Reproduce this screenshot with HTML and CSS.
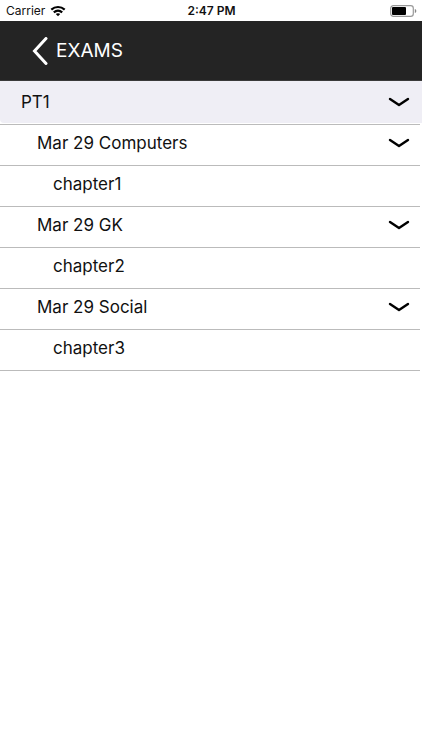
FILE: index.html
```
<!DOCTYPE html>
<html lang="en">
<head>
  <meta charset="UTF-8">
  <meta name="viewport" content="width=device-width, initial-scale=1.0">
  <title>Exams</title>
  <link rel="stylesheet" href="styles.css">
</head>
<body>
  <div class="status-bar">
    <div class="carrier">
      <span>Carrier</span>
      <svg class="wifi" width="16" height="12" viewBox="0 0 16 12" fill="none" stroke="#000" stroke-width="2.2">
        <path d="M1.3 4.6C5.2 1.1 10.8 1.1 14.7 4.6"/>
        <path d="M3.8 7.4C6.3 5.2 9.7 5.2 12.2 7.4"/>
        <path d="M5.8 9L8 11.3L10.2 9C9 7.9 7 7.9 5.8 9Z" fill="#000" stroke="none"/>
      </svg>
    </div>
    <time class="clock">2:47 PM</time>
    <svg class="battery" width="27" height="12" viewBox="0 0 27 12">
      <rect x="0.7" y="0.7" width="22.6" height="10.6" rx="2.6" fill="none" stroke="#999" stroke-width="1.2"/>
      <rect x="2" y="2" width="14" height="8" rx="1" fill="#000"/>
      <path d="M24.8 4C26.8 4.6 26.8 7.4 24.8 8Z" fill="#888"/>
    </svg>
  </div>
  <header class="nav-bar">
    <button class="back" type="button" aria-label="Back">
      <svg width="16" height="28" viewBox="0 0 16 28" fill="none" stroke="#fff" stroke-width="3" stroke-linecap="round">
        <path d="M14 1.5L2.5 14L14 26.5"/>
      </svg>
    </button>
    <h1>EXAMS</h1>
  </header>
  <main>
    <ul class="exam-list">
      <li class="selected">
        <button class="row exam" type="button" aria-expanded="true">
          <span>PT1</span>
          <svg class="chevron" viewBox="0 0 22 10"><path d="M2 2L11 8L20 2"/></svg>
        </button>
      </li>
      <li>
        <button class="row subject" type="button" aria-expanded="true">
          <span>Mar 29 Computers</span>
          <svg class="chevron" viewBox="0 0 22 10"><path d="M2 2L11 8L20 2"/></svg>
        </button>
      </li>
      <li class="row chapter">chapter1</li>
      <li>
        <button class="row subject" type="button" aria-expanded="true">
          <span>Mar 29 GK</span>
          <svg class="chevron" viewBox="0 0 22 10"><path d="M2 2L11 8L20 2"/></svg>
        </button>
      </li>
      <li class="row chapter">chapter2</li>
      <li>
        <button class="row subject" type="button" aria-expanded="true">
          <span>Mar 29 Social</span>
          <svg class="chevron" viewBox="0 0 22 10"><path d="M2 2L11 8L20 2"/></svg>
        </button>
      </li>
      <li class="row chapter">chapter3</li>
    </ul>
  </main>
</body>
</html>
```
FILE: styles.css
```
* {
  box-sizing: border-box;
}
body {
  margin: 0;
  background: #fff;
  color: #111;
  font-family: Inter, "Liberation Sans", sans-serif;
  font-size: 17px;
}
.status-bar {
  display: grid;
  grid-template-columns: 1fr auto 1fr;
  align-items: center;
  height: 21px;
  padding: 0 5px 0 6px;
  font-size: 12px;
}
.carrier {
  display: flex;
  align-items: center;
  gap: 5px;
}
.clock {
  font-weight: 600;
}
.battery {
  justify-self: end;
}
.nav-bar {
  display: flex;
  align-items: center;
  gap: 8px;
  height: 60px;
  padding: 0 32px;
  background: #242424;
  border-bottom: 1px solid #3a3a3a;
  color: #fff;
}
.nav-bar h1 {
  margin: 0;
  font-size: 19px;
  font-weight: 400;
}
.back {
  display: flex;
  padding: 0;
  border: none;
  background: none;
  cursor: pointer;
}
.exam-list {
  margin: 0;
  padding: 0 2px 0 0;
  list-style: none;
}
.row {
  display: flex;
  align-items: center;
  justify-content: space-between;
  width: 100%;
  height: 41px;
  padding: 0 10px 4px 37px;
  border: none;
  border-bottom: 1px solid #bbb;
  background: none;
  color: inherit;
  font: inherit;
  text-align: left;
}
button.row {
  cursor: pointer;
}
.selected {
  padding-bottom: 1px;
  border-bottom: 1px solid #bbb;
}
/* the grey fill runs past the separator to the screen edge */
.exam {
  width: calc(100% + 2px);
  height: 42px;
  padding: 0 12px 0 21px;
  border: none;
  border-radius: 0 0 0 4px;
  background: #efeef5;
}
.chapter {
  padding-left: 53px;
}
.chevron {
  width: 22px;
  height: 10px;
  fill: none;
  stroke: #000;
  stroke-width: 2.4;
  stroke-linecap: round;
  stroke-linejoin: round;
}
```
